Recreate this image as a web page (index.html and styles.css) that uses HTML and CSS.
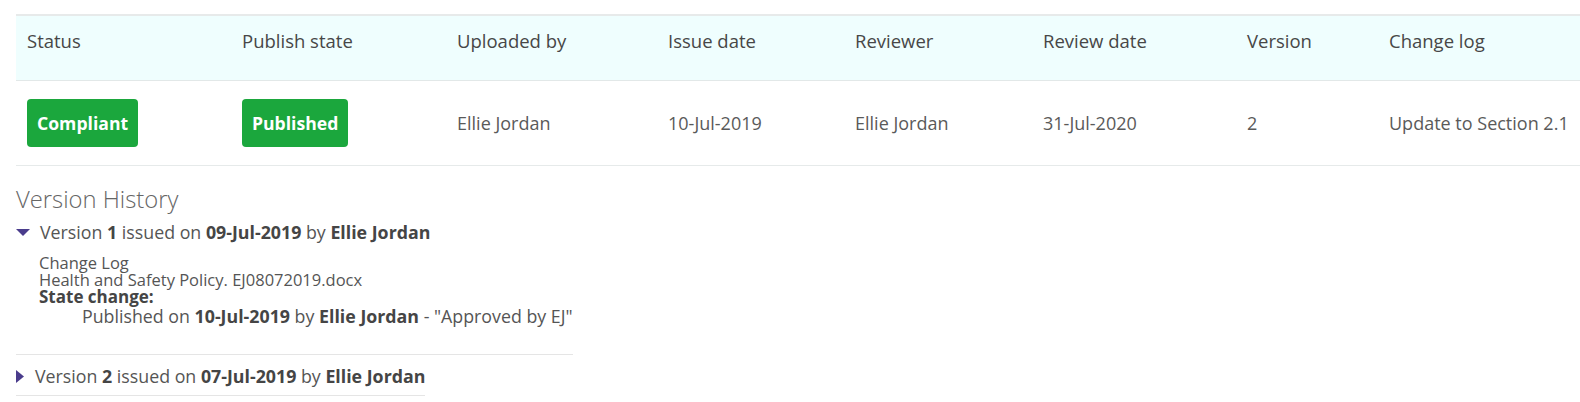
FILE: index.html
```html
<!DOCTYPE html>
<html>
<head>
<meta charset="utf-8">
<link rel="stylesheet" href="styles.css">
</head>
<body>
<div class="page">
  <table class="doc-table">
    <colgroup>
      <col class="c1"><col class="c2"><col class="c3"><col class="c4"><col class="c5"><col class="c6"><col class="c7"><col class="c8">
    </colgroup>
    <thead>
      <tr>
        <th>Status</th>
        <th>Publish state</th>
        <th>Uploaded by</th>
        <th>Issue date</th>
        <th>Reviewer</th>
        <th>Review date</th>
        <th>Version</th>
        <th>Change log</th>
      </tr>
    </thead>
    <tbody>
      <tr>
        <td><span class="badge">Compliant</span></td>
        <td><span class="badge">Published</span></td>
        <td>Ellie Jordan</td>
        <td>10-Jul-2019</td>
        <td>Ellie Jordan</td>
        <td>31-Jul-2020</td>
        <td>2</td>
        <td>Update to Section 2.1</td>
      </tr>
    </tbody>
  </table>

  <section class="history">
    <h2 class="history-title">Version History</h2>

    <div class="version open">
      <div class="version-summary">
        <svg class="caret-down" width="14" height="7" viewBox="0 0 14 7"><polygon points="0,0 14,0 7,7" fill="#4a3c8c"/></svg>
        <span>Version <b>1</b> issued on <b>09-Jul-2019</b> by <b>Ellie Jordan</b></span>
      </div>
      <div class="version-body">
        <div class="log-line">Change Log</div>
        <div class="log-line">Health and Safety Policy. EJ08072019.docx</div>
        <div class="log-line state-title"><b>State change:</b></div>
        <div class="state-line">Published on <b>10-Jul-2019</b> by <b>Ellie Jordan</b> - "Approved by EJ"</div>
      </div>
    </div>

    <div class="version">
      <div class="version-summary">
        <svg class="caret-right" width="8" height="13" viewBox="0 0 8 13"><polygon points="0,0 8,6.5 0,13" fill="#4a3c8c"/></svg>
        <span>Version <b>2</b> issued on <b>07-Jul-2019</b> by <b>Ellie Jordan</b></span>
      </div>
    </div>
  </section>
</div>
</body>
</html>
```

FILE: styles.css
```css
html, body {
  margin: 0;
  padding: 0;
  background: #ffffff;
}

body {
  font-family: "Open Sans", "Liberation Sans", sans-serif;
  color: #555555;
  overflow: hidden;
}

.page {
  padding: 14px 0 0 16px;
}

.doc-table {
  width: 1564px;
  border-collapse: collapse;
  table-layout: fixed;
  font-size: 18px;
}

.c1 { width: 215px; }
.c2 { width: 215px; }
.c3 { width: 211px; }
.c4 { width: 187px; }
.c5 { width: 188px; }
.c6 { width: 204px; }
.c7 { width: 142px; }
.c8 { width: 202px; }

.doc-table thead tr {
  background: #effefe;
  border-top: 2px solid #e7eaea;
  border-bottom: 1px solid #e2e8e8;
}

.doc-table th {
  text-align: left;
  font-weight: 400;
  font-size: 18.5px;
  color: #474747;
  line-height: 25px;
  padding: 12px 0 27px 11px;
  vertical-align: top;
}

.doc-table tbody tr {
  border-bottom: 1px solid #e6eaea;
}

.doc-table td {
  height: 84px;
  padding: 0 0 0 11px;
  vertical-align: middle;
  color: #5a5a5a;
}

.badge {
  display: inline-flex;
  align-items: center;
  height: 48px;
  padding: 0 10px;
  border-radius: 4px;
  background: #1ba73d;
  color: #ffffff;
  font-weight: 700;
  font-size: 17.6px;
}

.history {
  padding-top: 17px;
}

.history-title {
  margin: 0;
  font-size: 23.8px;
  font-weight: 300;
  color: #666666;
  line-height: 32px;
}

.version {
  display: table;
  border-bottom: 1px solid #e5e5e5;
}

.version-summary {
  display: flex;
  align-items: center;
  height: 34px;
  font-size: 17.8px;
  color: #555555;
}

.version b {
  color: #454545;
  font-weight: 700;
}

.caret-down {
  margin-right: 10px;
  margin-top: 1px;
}

.caret-right {
  margin-right: 11px;
}

.version.open {
  padding-bottom: 28px;
}

.version-body {
  padding-left: 23px;
  padding-top: 5px;
}

.log-line {
  font-size: 16.5px;
  line-height: 17px;
}

.state-title {
  font-size: 17px;
}

.state-line {
  padding-left: 43px;
  padding-top: 1px;
  font-size: 17.8px;
  line-height: 20px;
}

.version:not(.open) {
  margin-top: 4px;
  padding-bottom: 2px;
}
```
